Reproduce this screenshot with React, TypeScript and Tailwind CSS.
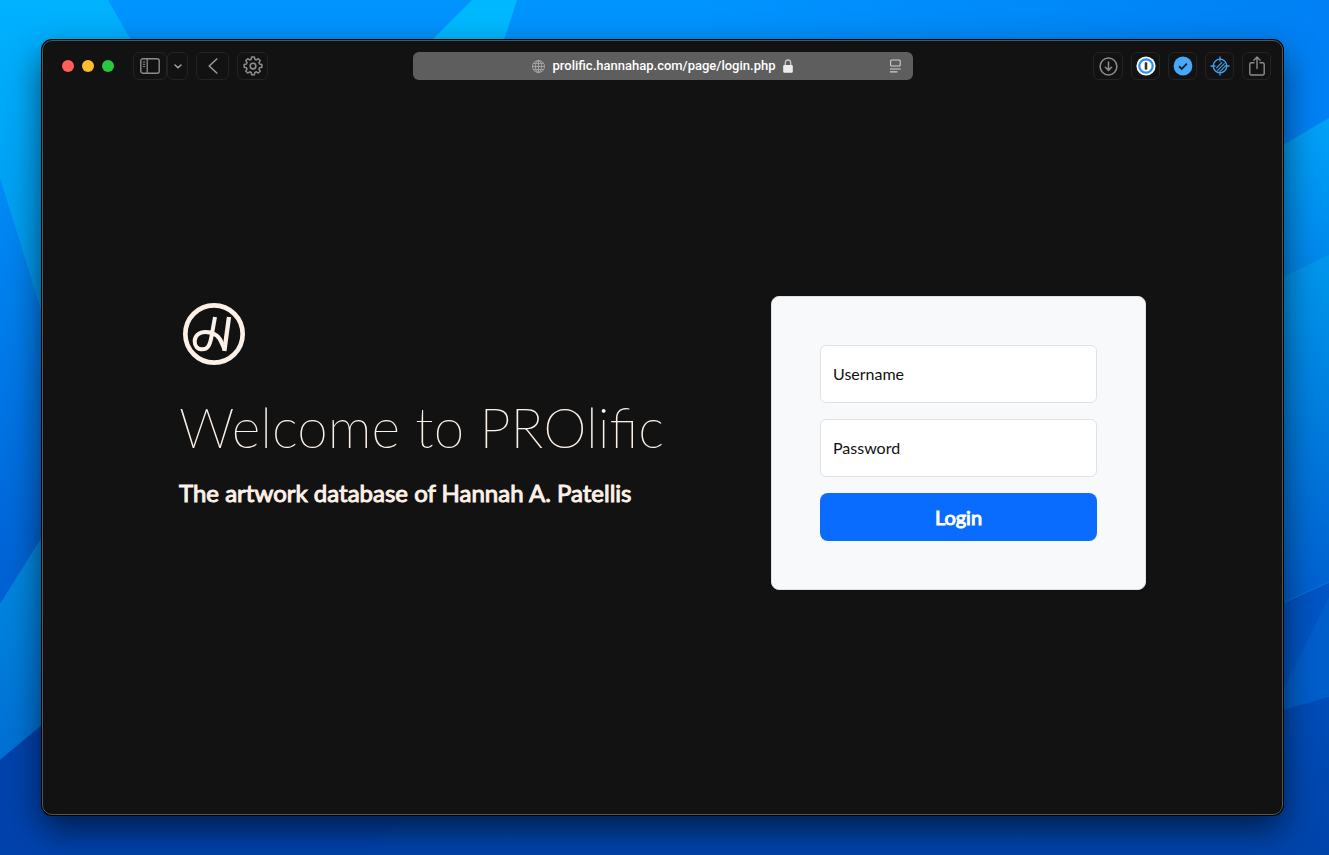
import React from "react";

function Wallpaper() {
  return (
    <svg
      aria-hidden="true"
      className="absolute inset-0 h-full w-full"
      viewBox="0 0 1329 855"
      preserveAspectRatio="none"
    >
      <defs>
        <linearGradient id="base" x1="0" y1="0" x2="0" y2="1">
          <stop offset="0" stopColor="#0094ff" />
          <stop offset="0.25" stopColor="#0088f4" />
          <stop offset="0.7" stopColor="#0060d4" />
          <stop offset="1" stopColor="#0040a8" />
        </linearGradient>
        <linearGradient id="cyan" gradientUnits="userSpaceOnUse" x1="0" y1="0" x2="0" y2="320">
          <stop offset="0" stopColor="#00b2ff" />
          <stop offset="1" stopColor="#0096ec" />
        </linearGradient>
        <linearGradient id="topRight" gradientUnits="userSpaceOnUse" x1="700" y1="0" x2="1329" y2="0">
          <stop offset="0" stopColor="#0080f4" stopOpacity="0" />
          <stop offset="1" stopColor="#0080f4" />
        </linearGradient>
        <linearGradient id="rightA" gradientUnits="userSpaceOnUse" x1="0" y1="118" x2="0" y2="277">
          <stop offset="0" stopColor="#00a2f8" />
          <stop offset="1" stopColor="#0085ea" />
        </linearGradient>
        <linearGradient id="rightB" gradientUnits="userSpaceOnUse" x1="0" y1="255" x2="0" y2="603">
          <stop offset="0" stopColor="#0097ec" />
          <stop offset="1" stopColor="#005fcf" />
        </linearGradient>
        <linearGradient id="leftC" gradientUnits="userSpaceOnUse" x1="0" y1="560" x2="0" y2="760">
          <stop offset="0" stopColor="#0088e0" />
          <stop offset="1" stopColor="#006fd4" />
        </linearGradient>
        <linearGradient id="floor" gradientUnits="userSpaceOnUse" x1="0" y1="700" x2="0" y2="855">
          <stop offset="0" stopColor="#004cb8" />
          <stop offset="1" stopColor="#0044aa" />
        </linearGradient>
      </defs>
      <rect width="1329" height="855" fill="url(#base)" />
      <rect x="700" width="629" height="160" fill="url(#topRight)" />
      <polygon points="0,0 108,0 131,40 300,380 62,380 42,313 0,178" fill="url(#cyan)" />
      <polygon points="472,0 517,0 504,40 480,100 372,100 432,40" fill="#00b8ff" />
      <polygon points="0,604 42,537 200,400 200,645 42,725 0,760" fill="url(#leftC)" />
      <polygon points="0,760 42,725 400,640 406,815 366,855 0,855" fill="#0042ac" />
      <polygon points="406,815 500,700 1250,700 1240,855 366,855" fill="url(#floor)" />
      <polygon points="1329,118 1283,145 1200,190 1200,310 1283,277 1329,255" fill="url(#rightA)" />
      <polygon points="1329,255 1283,277 1200,310 1200,640 1283,603 1329,582" fill="url(#rightB)" />
      <polygon points="1329,582 1283,603 1200,640 1200,740 1283,710 1329,697" fill="#0054c4" />
      <polygon points="1329,597 1283,690 1283,710 1329,697" fill="#005ecb" />
      <polygon points="1329,697 1283,710 1200,740 1220,855 1329,855" fill="url(#floor)" />
      <line x1="1283" y1="603" x2="1329" y2="582" stroke="#0078dc" />
    </svg>
  );
}

function ToolButton({
  label,
  className,
  children,
}: {
  label: string;
  className: string;
  children: React.ReactNode;
}) {
  return (
    <button
      type="button"
      aria-label={label}
      className={`flex h-7 shrink-0 items-center justify-center rounded-md border border-[#232323] text-[#8c8c8c] ${className}`}
    >
      {children}
    </button>
  );
}

function SidebarIcon() {
  return (
    <svg width="20" height="16" viewBox="0 0 20 16" fill="none" stroke="currentColor">
      <rect x="0.8" y="0.8" width="18.4" height="14.4" rx="2" strokeWidth="1.4" />
      <path d="M7.2 1v14" strokeWidth="1.3" />
      <path d="M2.8 4h2.4M2.8 6.3h2.4M2.8 8.6h2.4" strokeWidth="1" />
    </svg>
  );
}

function GearIcon() {
  return (
    <svg width="20" height="20" viewBox="0 0 24 24" fill="none" stroke="currentColor" strokeWidth="1.9" strokeLinejoin="round">
      <path d="M10.3 1.8h3.4l.6 2.9 1.9.8 2.5-1.6 2.4 2.4-1.6 2.5.8 1.9 2.9.6v3.4l-2.9.6-.8 1.9 1.6 2.5-2.4 2.4-2.5-1.6-1.9.8-.6 2.9h-3.4l-.6-2.9-1.9-.8-2.5 1.6-2.4-2.4 1.6-2.5-.8-1.9-2.9-.6v-3.4l2.9-.6.8-1.9-1.6-2.5 2.4-2.4 2.5 1.6 1.9-.8z" transform="translate(0.6 -0.5) scale(0.95)" />
      <circle cx="12" cy="12" r="3.4" />
    </svg>
  );
}

function GlobeIcon() {
  return (
    <svg width="13" height="13" viewBox="0 0 13 13" fill="none" stroke="#b4b4b4" strokeWidth="0.8" aria-hidden="true">
      <circle cx="6.5" cy="6.5" r="6" />
      <ellipse cx="6.5" cy="6.5" rx="3" ry="6" />
      <path d="M6.5 .5v12M.5 6.5h12M1.5 3.4h10M1.5 9.6h10" />
    </svg>
  );
}

function LockIcon() {
  return (
    <svg width="10" height="14" viewBox="0 0 10 14" aria-hidden="true">
      <path d="M2.3 7V4a2.7 3 0 0 1 5.4 0v3" fill="none" stroke="#c8c8c8" strokeWidth="1.3" />
      <rect x="0.2" y="6" width="9.6" height="7.8" rx="1.3" fill="#ededed" />
    </svg>
  );
}

function Logo() {
  return (
    <svg role="img" aria-label="H monogram" width="62" height="62" viewBox="39 39 186 186" fill="none" stroke="#fdf1e7">
      <circle cx="132" cy="132" r="86" strokeWidth="14" />
      <path
        d="M135 81 L124 142 C119 168 112 178 97 178 C82 178 74 168 74 154 C74 137 88 126 106 126 C134 126 150 142 157 163 L163 178"
        strokeWidth="12"
      />
      <path d="M177 81 L163 183" strokeWidth="13" />
    </svg>
  );
}

function Toolbar() {
  return (
    <header className="grid grid-cols-[1fr_minmax(0,500px)_1fr] items-center pt-[11px]">
      <div className="flex items-center pl-[19px]">
        <div className="flex gap-2">
          <button type="button" aria-label="Close" className="size-3 rounded-full bg-[#ff5f57]" />
          <button type="button" aria-label="Minimize" className="size-3 rounded-full bg-[#febc2e]" />
          <button type="button" aria-label="Zoom" className="size-3 rounded-full bg-[#28c840]" />
        </div>
        <div className="ml-[19px] flex gap-2">
          <div className="flex">
            <ToolButton label="Toggle sidebar" className="w-[34px]">
              <SidebarIcon />
            </ToolButton>
            <ToolButton label="Tab groups" className="w-[21px]">
              <svg width="8" height="5" viewBox="0 0 8 5" fill="none" stroke="#a6a6a6" strokeWidth="1.5" strokeLinecap="round" strokeLinejoin="round">
                <path d="M1 1l3 2.8L7 1" />
              </svg>
            </ToolButton>
          </div>
          <ToolButton label="Back" className="w-[33px]">
            <svg width="10" height="16" viewBox="0 0 10 16" fill="none" stroke="#9a9a9a" strokeWidth="1.6" strokeLinecap="round" strokeLinejoin="round">
              <path d="M8.8 1L1.2 8l7.6 7" />
            </svg>
          </ToolButton>
          <ToolButton label="Website settings" className="w-[31px]">
            <GearIcon />
          </ToolButton>
        </div>
      </div>

      <div className="grid h-7 grid-cols-[1fr_auto_1fr] items-center rounded-md bg-[#5e5e5e]">
        <span className="col-start-2 flex items-center gap-2 font-[Roboto,sans-serif] text-[13px] leading-4 font-medium text-white">
          <GlobeIcon />
          <span>prolific.hannahap.com/page/login.php</span>
          <LockIcon />
        </span>
        <button type="button" aria-label="Show reader" className="mr-3 justify-self-end">
          <svg width="11" height="14" viewBox="0 0 11 14" fill="none" stroke="#d0d0d0" strokeWidth="1.1">
            <rect x="0.6" y="1" width="9.6" height="6" rx="1" />
            <path d="M0 10h10.8M0 12.9h7.4" />
          </svg>
        </button>
      </div>

      <div className="flex justify-end gap-2 pr-[11px]">
        <ToolButton label="Downloads" className="w-[30px]">
          <svg width="19" height="19" viewBox="0 0 19 19" fill="none" stroke="currentColor" strokeWidth="1.5" strokeLinecap="round" strokeLinejoin="round">
            <circle cx="9.5" cy="9.5" r="8.4" />
            <path d="M9.5 5v8.3M6.4 10.3l3.1 3.1 3.1-3.1" />
          </svg>
        </ToolButton>
        <ToolButton label="Password manager" className="w-[29px]">
          <svg width="20" height="20" viewBox="0 0 20 20">
            <circle cx="10" cy="10" r="9.6" fill="#fff" />
            <circle cx="10" cy="10" r="6.7" fill="#fff" stroke="#2a8cf4" strokeWidth="2.2" />
            <rect x="8.7" y="6.3" width="2.6" height="7.4" rx="0.8" fill="#333" />
          </svg>
        </ToolButton>
        <ToolButton label="Verified" className="w-[29px]">
          <svg width="20" height="20" viewBox="0 0 20 20">
            <circle cx="10" cy="10" r="9.4" fill="#45a8fa" />
            <path d="M6 10.3l2.7 2.6 5.2-5.2" fill="none" stroke="#17212b" strokeWidth="1.9" />
          </svg>
        </ToolButton>
        <ToolButton label="Content blocker" className="w-[29px]">
          <svg width="20" height="20" viewBox="0 0 20 20" fill="none" stroke="#45a0f0" strokeWidth="1.3">
            <circle cx="10" cy="10" r="6.8" />
            <path d="M10 .5v5M10 14.5v5M.5 10h5M14.5 10h5" />
            <path d="M6.2 12.2l6-6M7.3 14.6l7.3-7.3M10.6 14.8l4.2-4.2" strokeWidth="1.2" />
          </svg>
        </ToolButton>
        <ToolButton label="Share" className="w-[29px]">
          <svg width="16" height="20" viewBox="0 0 16 20" fill="none" stroke="currentColor" strokeWidth="1.4" strokeLinecap="round" strokeLinejoin="round">
            <path d="M5 6.8H2.2A1.4 1.4 0 0 0 .8 8.2v9.4A1.4 1.4 0 0 0 2.2 19h11.6a1.4 1.4 0 0 0 1.4-1.4V8.2a1.4 1.4 0 0 0-1.4-1.4H11M8 12.6V1.2M4.9 4.2L8 1l3.1 3.2" />
          </svg>
        </ToolButton>
      </div>
    </header>
  );
}

function Field({ id, label, type }: { id: string; label: string; type: string }) {
  return (
    <div className="relative">
      <input
        id={id}
        type={type}
        placeholder=" "
        className="peer h-[58px] w-full rounded-md border border-[#dee2e6] bg-white px-3 pt-5 text-base text-[#111] outline-none focus:border-[#86b7fe]"
      />
      <label
        htmlFor={id}
        className="pointer-events-none absolute top-0 left-[13px] text-sm text-[#111] peer-placeholder-shown:top-[17px] peer-placeholder-shown:text-base"
      >
        {label}
      </label>
    </div>
  );
}

export default function App() {
  return (
    <div className="relative flex min-h-screen bg-[#0070e0] py-10 pr-[46px] pl-[42px] font-[Lato,sans-serif]">
      <Wallpaper />
      <div className="relative flex flex-1 flex-col rounded-[10px] border border-[#555] bg-[#121212] shadow-[0_0_0_1px_#000,0_14px_34px_rgba(0,0,0,0.6)]">
        <Toolbar />
        <main className="flex flex-1 items-center justify-center px-6 pb-2">
          <div className="flex w-full max-w-[967px] flex-wrap items-center justify-between gap-8">
            <section className="pb-[74px] text-[#fdf1e7]">
              <div className="pl-1">
                <Logo />
              </div>
              <h1 className="mt-7 text-[55px] leading-[68px] font-[275]">Welcome to PROlific</h1>
              <h2 className="mt-4 text-2xl leading-8 font-normal [-webkit-text-stroke:1px]">
                The artwork database of Hannah A. Patellis
              </h2>
            </section>
            <form
              className="flex w-full max-w-[375px] flex-col gap-4 rounded-lg border border-[#dee2e6] bg-[#f8f9fa] p-12"
              onSubmit={(event) => event.preventDefault()}
            >
              <Field id="username" label="Username" type="text" />
              <Field id="password" label="Password" type="password" />
              <button
                type="submit"
                className="h-12 rounded-lg bg-[#0a6cff] text-xl font-normal text-white [-webkit-text-stroke:1px]"
              >
                Login
              </button>
            </form>
          </div>
        </main>
      </div>
    </div>
  );
}
